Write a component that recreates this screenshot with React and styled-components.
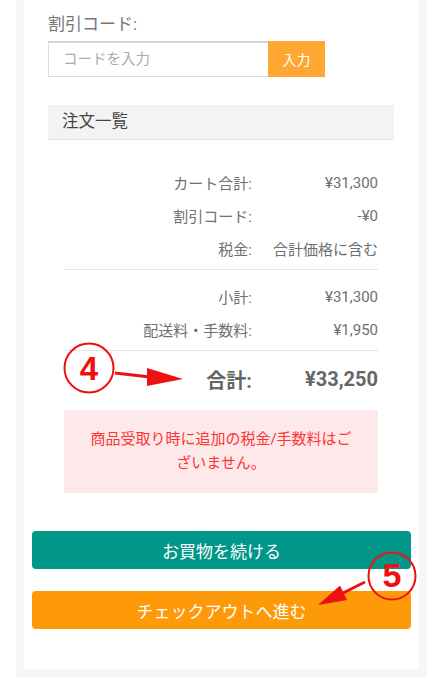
import React from 'react';
import styled, { createGlobalStyle } from 'styled-components';

const GlobalStyle = createGlobalStyle`
  body {
    margin: 0;
    background: #fff;
    font-family: Roboto, "Noto Sans CJK JP", sans-serif;
  }
`;

const summary = [
  { label: 'カート合計:', value: '¥31,300' },
  { label: '割引コード:', value: '-¥0' },
  { label: '税金:', value: '合計価格に含む' },
];

const fees = [
  { label: '小計:', value: '¥31,300' },
  { label: '配送料・手数料:', value: '¥1,950' },
];

const Annotation = ({ left, top, width, height, children }) => (
  <Overlay $left={left} $top={top} width={width} height={height} viewBox={`0 0 ${width} ${height}`}>
    {children}
  </Overlay>
);

const App = () => {
  return (
    <>
      <GlobalStyle />
      <Page>
        <Panel>
          <Form>
            <Label>割引コード:</Label>
            <CouponRow>
              <CouponInput placeholder='コードを入力' />
              <ApplyButton>入力</ApplyButton>
            </CouponRow>

            <SectionHeader>注文一覧</SectionHeader>

            <Summary>
              {summary.map((r) => (
                <Row key={r.label}>
                  <span>{r.label}</span>
                  <span>{r.value}</span>
                </Row>
              ))}
              <Divider />
              {fees.map((r) => (
                <Row key={r.label}>
                  <span>{r.label}</span>
                  <span>{r.value}</span>
                </Row>
              ))}
              <Divider />
              <TotalRow>
                <span>合計:</span>
                <span>¥33,250</span>
              </TotalRow>
              <Notice>商品受取り時に追加の税金/手数料はございません。</Notice>
            </Summary>
          </Form>

          <Actions>
            <ActionButton $color='#009688'>お買物を続ける</ActionButton>
            <ActionButton $color='#fe9a0a'>チェックアウトへ進む</ActionButton>
          </Actions>

          <Annotation left={36} top={340} width={130} height={58}>
            <circle cx='29' cy='28' r='24.5' fill='none' stroke='#ee1111' strokeWidth='2' />
            <NumberText x='29' y='40' fontSize='33'>4</NumberText>
            <line x1='55' y1='33' x2='90' y2='37' stroke='#ee1111' strokeWidth='3' />
            <polygon points='87,28 87,46 123,39' fill='#ee1111' />
          </Annotation>

          <Annotation left={286} top={550} width={112} height={60}>
            <circle cx='82' cy='26' r='23.5' fill='none' stroke='#ee1111' strokeWidth='2' />
            <NumberText x='82' y='37' fontSize='34'>5</NumberText>
            <line x1='55' y1='32' x2='33' y2='43' stroke='#ee1111' strokeWidth='3' />
            <polygon points='8,55 37,50 30,35.5' fill='#ee1111' />
          </Annotation>
        </Panel>
      </Page>
    </>
  );
};

export default App;

const Page = styled.div`
  padding: 0 16px 2px;
`;

const Panel = styled.div`
  position: relative;
  background: #fff;
  border: 8px solid #f6f6f6;
  border-top: 0;
  border-bottom-width: 9px;
  padding: 12px 0 40px;
`;

const Form = styled.div`
  padding: 0 25px 0 24px;
`;

const Label = styled.div`
  font-size: 17px;
  line-height: 24px;
  color: #777;
`;

const CouponRow = styled.div`
  display: flex;
  margin-top: 5px;
  height: 36px;
`;

const CouponInput = styled.input`
  box-sizing: border-box;
  width: 220px;
  height: 36px;
  border: 1px solid #dcdcdc;
  border-top: 2px solid #d6d6d6;
  border-right: 0;
  padding: 0 14px;
  font-family: inherit;
  font-size: 14.5px;
  outline: none;
  background: #fff;

  &::placeholder {
    color: #aaa;
  }
`;

const ApplyButton = styled.button`
  width: 57px;
  height: 36px;
  border: 0;
  background: #ffa733;
  color: #fff;
  font-family: inherit;
  font-size: 14px;
  padding: 0;
`;

const SectionHeader = styled.div`
  margin-top: 28px;
  height: 34px;
  line-height: 34px;
  padding-left: 14px;
  background: #f3f3f3;
  border-bottom: 1px solid #e2e2e2;
  font-size: 16.5px;
  color: #444;
`;

const Summary = styled.div`
  padding: 26px 16px 0;
`;

const Row = styled.div`
  display: grid;
  grid-template-columns: 1fr 106px;
  column-gap: 20px;
  height: 33px;
  align-items: center;
  font-size: 15px;
  color: #6f6f6f;

  span {
    text-align: right;
    white-space: nowrap;
  }
`;

const Divider = styled.div`
  height: 1px;
  background: #e4e4e4;
  margin: 4px 0 10px;
`;

const TotalRow = styled(Row)`
  height: 38px;
  margin-top: -1px;
  font-size: 20px;
  font-weight: 700;
  color: #666;
`;

const Notice = styled.div`
  margin-top: 12px;
  background: #fde8ea;
  padding: 17px 24px 18px;
  text-align: center;
  font-size: 15px;
  line-height: 24px;
  color: #ff3333;
`;

const Actions = styled.div`
  display: flex;
  flex-direction: column;
  gap: 22px;
  padding: 38px 8px 0;
`;

const ActionButton = styled.button`
  height: 38px;
  border: 0;
  border-radius: 4px;
  background: ${(p) => p.$color};
  color: #fff;
  font-family: inherit;
  font-size: 17px;
  padding: 0;
`;

const Overlay = styled.svg`
  position: absolute;
  left: ${(p) => p.$left}px;
  top: ${(p) => p.$top}px;
  overflow: visible;
  pointer-events: none;
`;

const NumberText = styled.text`
  font-family: "Liberation Sans", Arial, sans-serif;
  font-weight: 700;
  fill: #ee1111;
  text-anchor: middle;
`;
